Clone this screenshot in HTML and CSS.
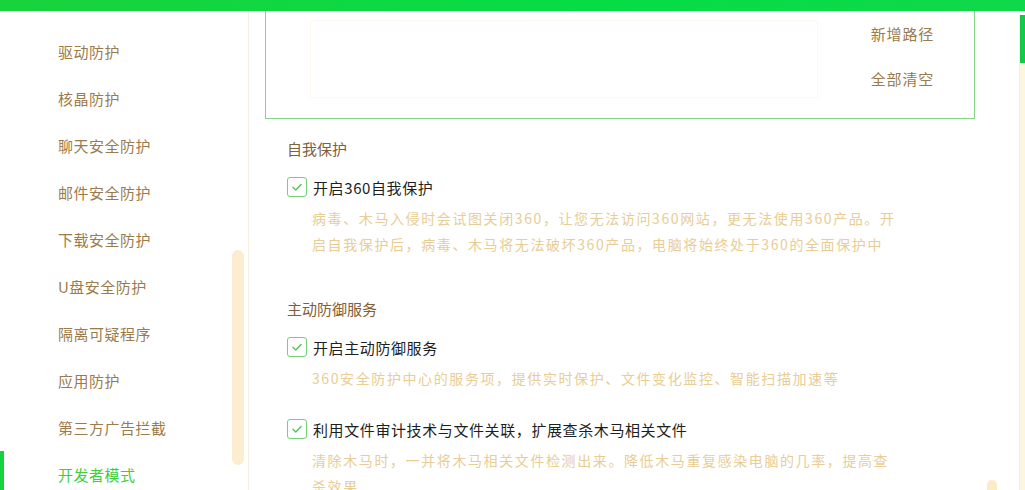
FILE: index.html
```html
<!DOCTYPE html>
<html lang="zh-CN">
<head>
  <meta charset="UTF-8" />
  <title>360安全防护中心 · 设置</title>
  <link rel="stylesheet" href="styles.css">
</head>
<body>
  <!-- Top strip -->
  <div class="topbar"></div>

  <div class="layout">
    <!-- Side menu -->
    <nav class="side">
      <a class="side-item">驱动防护</a>
      <a class="side-item">核晶防护</a>
      <a class="side-item">聊天安全防护</a>
      <a class="side-item">邮件安全防护</a>
      <a class="side-item">下载安全防护</a>
      <a class="side-item">U盘安全防护</a>
      <a class="side-item">隔离可疑程序</a>
      <a class="side-item">应用防护</a>
      <a class="side-item">第三方广告拦截</a>
      <a class="side-item active">开发者模式</a>
      <div class="side-scroll"></div>
    </nav>

    <!-- Settings -->
    <main class="content">
      <div class="path-box">
        <div class="path-list"></div>
        <div class="path-actions">
          <a class="link-btn">新增路径</a>
          <a class="link-btn">全部清空</a>
        </div>
      </div>

      <section class="group first">
        <h3>自我保护</h3>
        <label class="check-row"><span class="check"><svg viewBox="0 0 20 20"><path d="M5.5 10.2l3.2 3.1 5.8-6"/></svg></span>开启360自我保护</label>
        <p class="desc">病毒、木马入侵时会试图关闭360，让您无法访问360网站，更无法使用360产品。开<br>启自我保护后，病毒、木马将无法破坏360产品，电脑将始终处于360的全面保护中</p>
      </section>

      <section class="group second">
        <h3>主动防御服务</h3>
        <label class="check-row"><span class="check"><svg viewBox="0 0 20 20"><path d="M5.5 10.2l3.2 3.1 5.8-6"/></svg></span>开启主动防御服务</label>
        <p class="desc">360安全防护中心的服务项，提供实时保护、文件变化监控、智能扫描加速等</p>
        <label class="check-row more"><span class="check"><svg viewBox="0 0 20 20"><path d="M5.5 10.2l3.2 3.1 5.8-6"/></svg></span>利用文件审计技术与文件关联，扩展查杀木马相关文件</label>
        <p class="desc">清除木马时，一并将木马相关文件检测出来。降低木马重复感染电脑的几率，提高查<br>杀效果</p>
      </section>

      <div class="corner-dot"></div>
    </main>

    <div class="vscroll"><div class="vthumb"></div></div>
  </div>
</body>
</html>
```

FILE: styles.css
```css
:root{
  --green:#12d43e;
  --line-green:#86d586;
  --brown:#9b7b4b;
  --brown-dark:#80603a;
  --gold:#e8cd95;
  --beige:#fcedd0;
}
*{box-sizing:border-box;margin:0;padding:0}
html,body{height:100%;overflow:hidden}
body{
  font-family:"Noto Sans CJK SC","Noto Sans",sans-serif;
  background:#fff;
  color:#222;
  display:flex;
  flex-direction:column;
}

/* ── top strip ─────────────────────────── */
.topbar{
  height:11px;
  flex-shrink:0;
  background:linear-gradient(90deg,#19d23c,#05dd45 60%,#10d84a);
}

.layout{flex:1;display:flex;min-height:0}

/* ── side menu ─────────────────────────── */
.side{
  width:249px;
  flex-shrink:0;
  border-right:1px solid #f6f0e4;
  padding-top:17px;
  position:relative;
}
.side-item{
  display:flex;
  align-items:center;
  height:47px;
  padding-left:58px;
  font-size:15px;
  letter-spacing:.5px;
  color:var(--brown);
  text-decoration:none;
}
.side-item.active{
  color:#3ccf3e;
  box-shadow:inset 4px 0 0 var(--green);
}
.side-scroll{
  position:absolute;
  left:232px;top:239px;
  width:12px;height:215px;
  border-radius:6px;
  background:var(--beige);
}

/* ── content ───────────────────────────── */
.content{
  flex:1;
  padding-left:16px;
  position:relative;
}
.path-box{
  width:710px;
  height:108px;
  border:1px solid var(--line-green);
  border-top:none;
  display:flex;
  align-items:flex-start;
  padding:9px 0 0 44px;
}
.path-list{
  width:508px;
  height:78px;
  border:1px solid #fdf9f0;
}
.path-actions{
  margin-left:auto;
  margin-right:40px;
  display:flex;
  flex-direction:column;
  gap:25px;
  padding-top:4px;
}
.link-btn{
  font-size:15px;
  line-height:20px;
  letter-spacing:.8px;
  color:var(--brown);
  cursor:pointer;
}

.group{padding-left:22px}
.group.first{margin-top:20px}
.group.second{margin-top:42px}
.group h3{
  font-size:15px;
  font-weight:normal;
  line-height:20px;
  color:var(--brown-dark);
}
.check-row{
  display:flex;
  align-items:center;
  gap:6px;
  height:20px;
  margin-top:18px;
  font-size:15px;
  letter-spacing:.6px;
  color:#1e1e1e;
}
.check-row.more{margin-top:28px}
.check{
  width:20px;height:20px;
  border:1.5px solid #74d174;
  border-radius:3px;
  display:flex;
}
.check svg{width:100%;height:100%}
.check path{fill:none;stroke:#4fc457;stroke-width:1.5;stroke-linecap:round;stroke-linejoin:round}
.desc{
  padding-left:25px;
  font-size:14px;
  line-height:26px;
  letter-spacing:1.6px;
  white-space:nowrap;
  color:var(--gold);
}
.check-row + .desc{margin-top:8px}

.corner-dot{
  position:absolute;
  right:22px;bottom:-6px;
  width:10px;height:16px;
  border-radius:5px;
  background:#fdebc6;
}

/* ── outer scroll bar ──────────────────── */
.vscroll{
  width:6px;
  flex-shrink:0;
  border-left:1px solid #f3eee2;
  background:#fef5de;
  margin-top:4px;
}
.vthumb{height:48px;background:#14c84a}
```
